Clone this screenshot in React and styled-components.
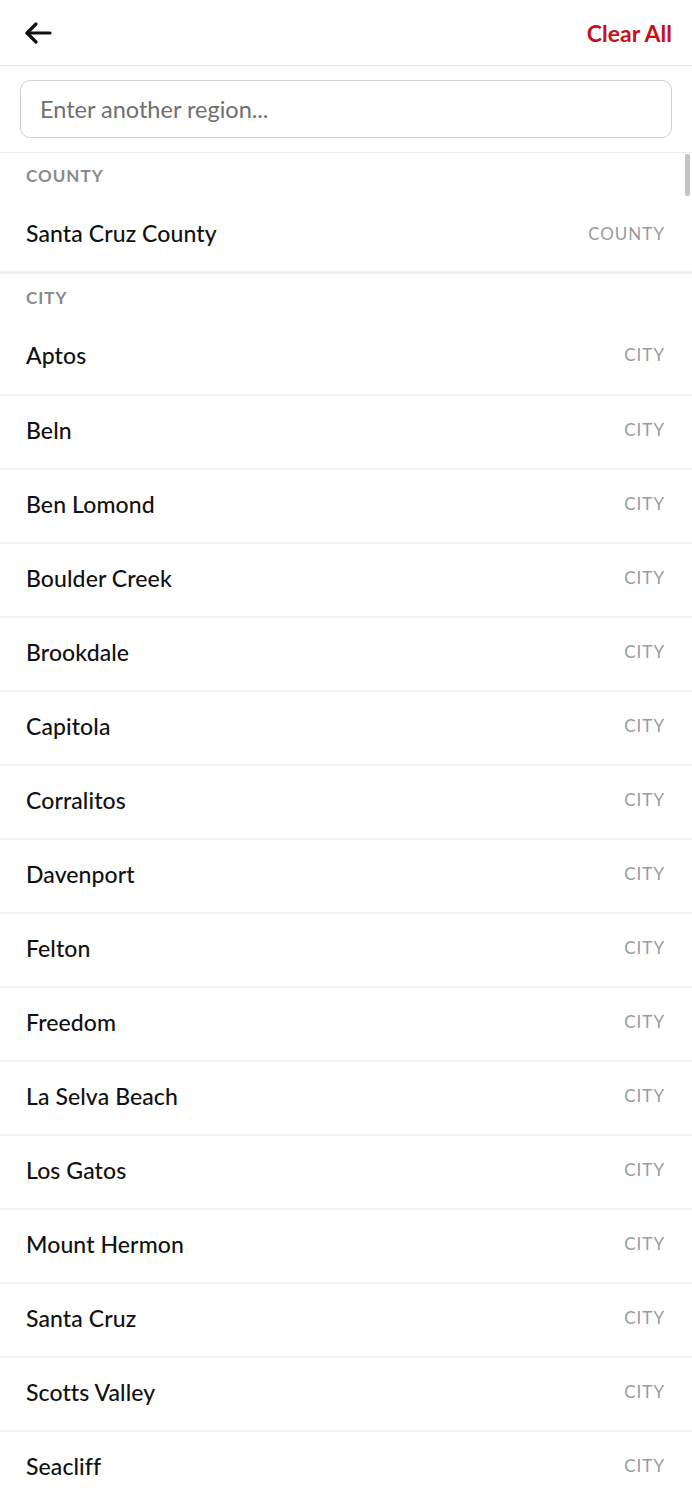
import React from "react";
import styled, { createGlobalStyle } from "styled-components";

const Global = createGlobalStyle`
  html, body { margin: 0; padding: 0; background: #fff; }
  body { font-family: "Lato", "Noto Sans", sans-serif; color: #111; }
  * { box-sizing: border-box; }
`;

const Page = styled.div`
  width: 692px;
  position: relative;
  background: #fff;
`;

const Header = styled.header`
  height: 66px;
  display: flex;
  align-items: center;
  justify-content: space-between;
  padding: 0 20px 0 24px;
  border-bottom: 1px solid #ebebeb;
`;

const BackButton = styled.button`
  border: 0;
  background: none;
  padding: 0;
  display: flex;
  align-items: center;
  cursor: pointer;
`;

const ClearAll = styled.button`
  border: 0;
  background: none;
  padding: 0;
  font-family: inherit;
  font-size: 23px;
  font-weight: 700;
  color: #c8101a;
  cursor: pointer;
`;

const SearchBar = styled.div`
  padding: 14px 20px 14px;
  border-bottom: 1px solid #ebebeb;
`;

const SearchInput = styled.input`
  width: 100%;
  height: 58px;
  border: 1.5px solid #cfcfcf;
  border-radius: 10px;
  padding: 0 19px;
  font-family: inherit;
  font-size: 23.5px;
  color: #333;
  outline: none;
  &::placeholder { color: #6f6f6f; }
`;

const Section = styled.section`
  border-bottom: ${(p) => (p.$thick ? "3px solid #eeeeee" : "none")};
`;

const SectionTitle = styled.div`
  height: ${(p) => p.$h}px;
  display: flex;
  align-items: center;
  padding: 0 26px;
  font-size: 17px;
  font-weight: 700;
  letter-spacing: 1px;
  color: #8a8a8a;
`;

const Row = styled.div`
  height: 74px;
  display: flex;
  align-items: center;
  justify-content: space-between;
  padding: 0 27px ${(p) => p.$pb}px 26px;
  border-top: ${(p) => (p.$divider ? "2px solid #f3f3f3" : "none")};
`;

const Name = styled.span`
  font-size: 23px;
  letter-spacing: 0.1px;
  font-weight: 500;
  color: #111;
`;

const Kind = styled.span`
  font-size: 17px;
  letter-spacing: 1px;
  color: #9a9a9a;
`;

const Scrollbar = styled.div`
  position: absolute;
  right: 2px;
  top: 154px;
  width: 5px;
  height: 42px;
  border-radius: 2px;
  background: #c4c4c4;
`;

const cities = [
  "Aptos", "Beln", "Ben Lomond", "Boulder Creek", "Brookdale", "Capitola",
  "Corralitos", "Davenport", "Felton", "Freedom", "La Selva Beach",
  "Los Gatos", "Mount Hermon", "Santa Cruz", "Scotts Valley", "Seacliff",
];

export default function App() {
  return (
    <Page>
      <Global />
      <Header>
        <BackButton aria-label="Back">
          <svg width="28" height="24" viewBox="0 0 28 24" fill="none" stroke="#111" strokeWidth="3.2" strokeLinecap="round" strokeLinejoin="round">
            <path d="M26 12H3" />
            <path d="M12 3L3 12l9 9" />
          </svg>
        </BackButton>
        <ClearAll>Clear All</ClearAll>
      </Header>
      <SearchBar>
        <SearchInput placeholder="Enter another region..." />
      </SearchBar>
      <Section $thick>
        <SectionTitle $h={44}>COUNTY</SectionTitle>
        <Row $pb={2}>
          <Name>Santa Cruz County</Name>
          <Kind>COUNTY</Kind>
        </Row>
      </Section>
      <Section>
        <SectionTitle $h={46}>CITY</SectionTitle>
        {cities.map((c, i) => (
          <Row key={c} $divider={i > 0} $pb={5}>
            <Name>{c}</Name>
            <Kind>CITY</Kind>
          </Row>
        ))}
      </Section>
      <Scrollbar />
    </Page>
  );
}
